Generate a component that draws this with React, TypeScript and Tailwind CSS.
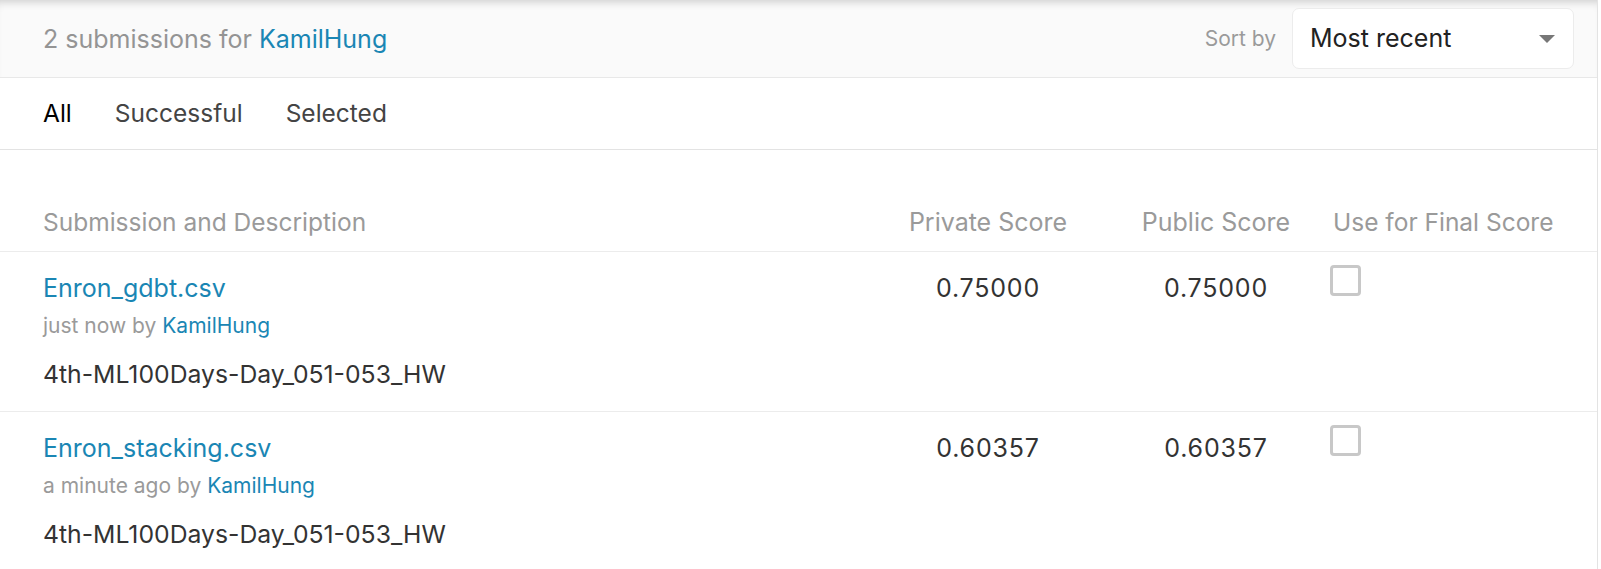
import React from 'react';

const submissions = [
  {
    file: 'Enron_gdbt.csv',
    when: 'just now',
    user: 'KamilHung',
    description: '4th-ML100Days-Day_051-053_HW',
    privateScore: '0.75000',
    publicScore: '0.75000',
  },
  {
    file: 'Enron_stacking.csv',
    when: 'a minute ago',
    user: 'KamilHung',
    description: '4th-ML100Days-Day_051-053_HW',
    privateScore: '0.60357',
    publicScore: '0.60357',
  },
];

const tabs = ['All', 'Successful', 'Selected'];

export default function App() {
  return (
    <div className="relative h-[569px] w-[1601px] overflow-hidden bg-white font-['Inter',sans-serif]">
      <div className="h-full w-[1598px] border-r border-[#e3e3e3]">
        {/* header */}
        <div className="flex h-[78px] items-center justify-between border-b border-[#e8e8e8] bg-[#fafafa] pl-[43px] pr-[23px] shadow-[inset_0_8px_8px_-6px_rgba(0,0,0,0.18)]">
          <div className="text-[25px] leading-[30px] text-[#949494]">
            2 submissions for <span className="text-[#1a86b4]">KamilHung</span>
          </div>
          <div className="flex items-center">
            <span className="mr-[16px] text-[21px] text-[#9a9a9a]">Sort by</span>
            <div className="flex h-[61px] w-[282px] items-center justify-between rounded-[7px] border border-[#ececec] bg-white pl-[17px] pr-[18px]">
              <span className="text-[25px] text-[#222]">Most recent</span>
              <svg width="16" height="8" viewBox="0 0 16 8">
                <path d="M0 0 L16 0 L8 8 Z" fill="#777" />
              </svg>
            </div>
          </div>
        </div>

        {/* tabs */}
        <div className="flex h-[72px] items-center gap-[43px] border-b border-[#e3e3e3] pl-[43px]">
          {tabs.map((t, i) => (
            <span
              key={t}
              className={i === 0 ? 'text-[24.5px] text-black' : 'text-[24.5px] text-[#444]'}
            >
              {t}
            </span>
          ))}
        </div>

        {/* table head */}
        <div className="grid grid-cols-[1fr_228px_228px_267px] border-b border-[#ececec] pb-[14px] pl-[43px] pt-[57px] text-[25px] leading-[30px] text-[#9a9a9a]">
          <span className="text-[24.5px]">Submission and Description</span>
          <span className="text-center">Private Score</span>
          <span className="text-center">Public Score</span>
          <span className="pl-[3px] text-[24.5px]">Use for Final Score</span>
        </div>

        {submissions.map((s) => (
          <div
            key={s.file}
            className="grid grid-cols-[1fr_228px_228px_267px] border-b border-[#ececec] pb-[22px] pl-[43px] pt-[21px]"
          >
            <div>
              <div className="text-[25px] leading-[30px] text-[#1a86b4]">{s.file}</div>
              <div className="mt-[10px] text-[21px] leading-[26px] text-[#9a9a9a]">
                {s.when} by <span className="text-[#1a86b4]">{s.user}</span>
              </div>
              <div className="mt-[20px] text-[24.75px] leading-[30px] text-[#333]">{s.description}</div>
            </div>
            <div className="text-center text-[25px] leading-[30px] tracking-[0.8px] text-[#333]">{s.privateScore}</div>
            <div className="text-center text-[25px] leading-[30px] tracking-[0.8px] text-[#333]">{s.publicScore}</div>
            <div className="-mt-[8px]">
              <div className="h-[31px] w-[31px] rounded-[4px] border-[3px] border-[#c8c8c8] bg-white" />
            </div>
          </div>
        ))}
      </div>
    </div>
  );
}
